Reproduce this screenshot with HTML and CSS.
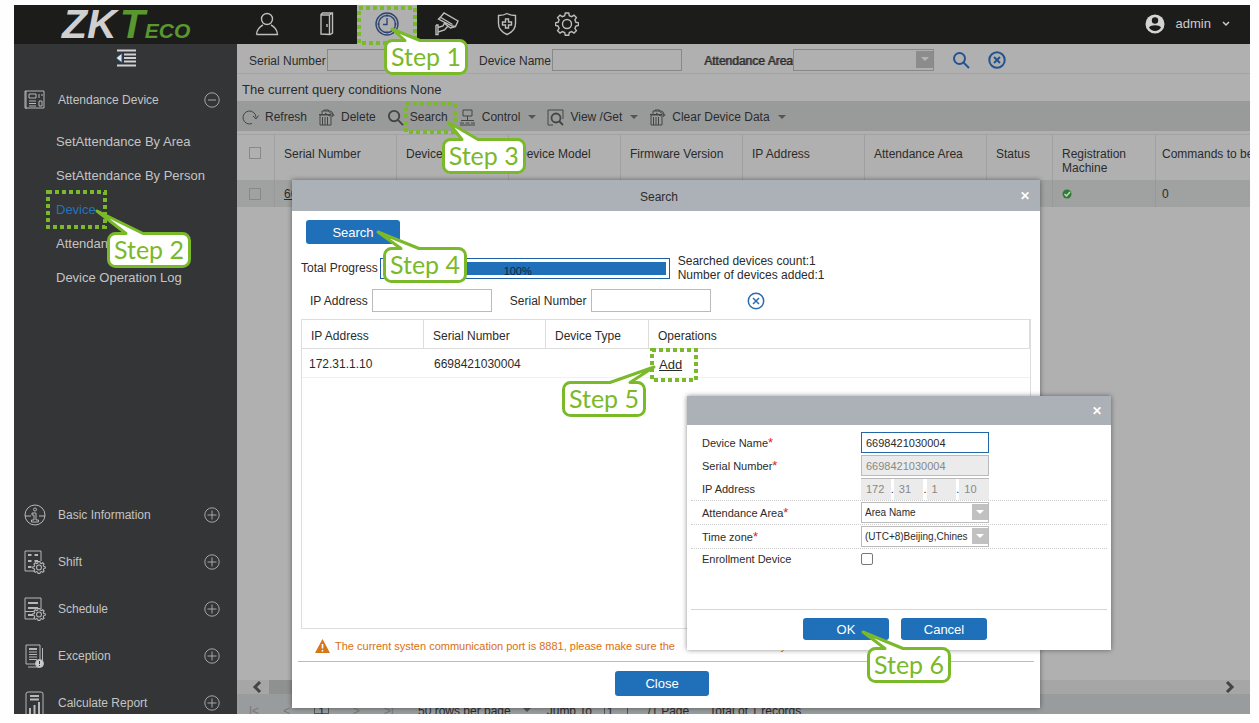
FILE: index.html
```
<!DOCTYPE html>
<html lang="en">
<head>
  <meta charset="UTF-8">
  <meta name="viewport" content="width=device-width, initial-scale=1.0">
  <title>ZKTeco - Attendance Device</title>
  <link rel="stylesheet" href="styles.css">
</head>
<body>
  <svg class="defs" width="0" height="0">
    <symbol id="plus" viewBox="0 0 16 16"><circle cx="8" cy="8" r="7.2"/><path d="M8 3.5v9M3.5 8h9"/></symbol>
    <symbol id="minus" viewBox="0 0 16 16"><circle cx="8" cy="8" r="7.2"/><path d="M4 8h8"/></symbol>
    <symbol id="trash" viewBox="0 0 17 17"><path d="M2 6h11v10H2zM1 5.5h12M4.500 8v8M7 8v8M9.500 8v8M4 5V2h6l5 4-1 2M6 2V1h4l4 2 2 4M7 4l5 3"/></symbol>
    <symbol id="lens" viewBox="0 0 18 18"><circle cx="7.500" cy="7.500" r="5.500"/><path d="M11.500 11.500 17 17"/></symbol>
    <symbol id="clear" viewBox="0 0 18 18"><circle cx="9" cy="9" r="7.700"/><path class="cross" d="M6 6l6 6M12 6l-6 6"/></symbol>
    <symbol id="cog" viewBox="0 0 24 24"><path d="M10.300 1h3.400l.6 2.700 2.400 1 2.300-1.500 2.400 2.400-1.500 2.300 1 2.400 2.700.6v2.400l-2.700.7-1 2.400 1.500 2.300-2.400 2.400-2.300-1.500-2.400 1-.6 2.700h-3.400l-.6-2.700-2.400-1-2.300 1.500-2.400-2.400 1.500-2.300-1-2.400-2.700-.7v-2.400l2.700-.6 1-2.400-1.500-2.300 2.400-2.400 2.300 1.500 2.400-1z"/><circle cx="12" cy="12" r="4.500"/></symbol>
  </svg>

  <div class="app">
    <header class="topbar">
      <div class="logo">ZK<span class="logo-t">T</span><span class="logo-eco">ECO</span></div>
      <nav class="tabs">
        <a class="tab" href="#" aria-label="Personnel"><svg width="24" height="24" viewBox="0 0 24 24"><circle cx="12" cy="7" r="5.500"/><path d="M1.500 22.500h21c0-4-3-8-6.500-9.500M1.500 22.500c0-4 3-8 6.500-9.500"/></svg></a>
        <a class="tab" href="#" aria-label="Access"><svg width="24" height="24" viewBox="0 0 24 24"><path d="M6 22V2.500L7.500 1H17.500V21L15 22.500zM6 22V3h8.500v19.500M14.500 3l3-2M12 12v3"/></svg></a>
        <span class="tab tab-active">
          <a href="#" aria-label="Attendance"><svg width="24" height="24" viewBox="0 0 24 24"><circle cx="12" cy="12" r="11"/><circle cx="12" cy="12" r="8.500"/><path d="M12 6v6.500H8M12 2.500v2M12 19.500v2M2.500 12h2M19.500 12h2"/></svg></a>
          <svg class="mark mark-1"><rect/></svg>
          <span class="callout callout-1"><svg><path d="M8.500 1.500H21L8-10 36 1.500H75.500a7 7 0 0 1 7 7V27.500a7 7 0 0 1-7 7H8.500a7 7 0 0 1-7-7V8.500a7 7 0 0 1 7-7z"/></svg><b>Step 1</b></span>
        </span>
        <a class="tab" href="#" aria-label="Video"><svg width="24" height="24" viewBox="0 0 24 24"><path d="M6 4.500 9 1l14 8-2.500 5.500-3.500-.5L3.500 7zM5 5l12.500 7.500M20.500 14.500l-5 1.500-6-4.500M1 13v9.500h2V20l6.500-2 3.500-4M3 20v-4.500l5-1.500 1.500-3M1 13h2v2.500"/></svg></a>
        <a class="tab" href="#" aria-label="Security"><svg width="24" height="24" viewBox="0 0 24 24"><path d="M12 1.500c2.500 1.500 5 2 8.500 2v8c0 5.500-4 9-8.500 11-4.500-2-8.500-5.500-8.500-11v-8c3.500 0 6-.5 8.500-2z"/><path d="M10.500 7h3v3h3v3h-3v3h-3v-3h-3v-3h3z"/></svg></a>
        <a class="tab" href="#" aria-label="System"><svg width="24" height="24"><use href="#cog"/></svg></a>
      </nav>
      <button class="user" type="button">
        <svg width="20" height="20" viewBox="0 0 20 20"><circle cx="10" cy="10" r="9.500" fill="#d4d4d4"/><circle cx="10" cy="6.500" r="3.200" fill="#1c1c1b"/><path d="M4 13.500c1.500-3 10.500-3 12 0-2.500 4.500-9.500 4.500-12 0z" fill="#1c1c1b"/></svg>
        <span>admin</span>
        <svg width="8" height="6" viewBox="0 0 8 6"><path d="M1 1l3 3 3-3" fill="none" stroke="#ccc" stroke-width="1.500"/></svg>
      </button>
    </header>

    <div class="body">
      <aside class="sidebar">
        <button class="collapse" type="button" aria-label="Collapse menu"><svg width="20" height="18" viewBox="0 0 20 18"><path d="M1 1.500h19M8 5.500h12M8 9h12M8 12.500h12M1 16.500h19" stroke="#d2d2d2" stroke-width="2"/><path d="M6 4v10L0 9z" fill="#dfe6ee" stroke="#2c4b70"/></svg></button>
        <a class="group" href="#"><svg class="gicon" viewBox="0 0 22 22"><path d="M2 2v18M1 2h19v17H1zM5 5h7v4H5zM5 12h7M5 14.500h7M5 17h7M15 5v4M18 5v2M15 12h3v5h-3z"/></svg><span>Attendance Device</span><svg class="toggle"><use href="#minus"/></svg></a>
        <ul class="submenu">
          <li><a href="#">SetAttendance By Area</a></li>
          <li><a href="#">SetAttendance By Person</a></li>
          <li class="current"><a href="#">Device</a>
            <svg class="mark mark-2"><rect/></svg>
            <span class="callout callout-2"><svg><path d="M8.500 1.500H19L-10-21 36 1.500H75.500a7 7 0 0 1 7 7V27.500a7 7 0 0 1-7 7H8.500a7 7 0 0 1-7-7V8.500a7 7 0 0 1 7-7z"/></svg><b>Step 2</b></span>
          </li>
          <li><a href="#">Attendance Point</a></li>
          <li><a href="#">Device Operation Log</a></li>
        </ul>
        <a class="group" href="#"><svg class="gicon" viewBox="0 0 22 22"><circle cx="11" cy="11" r="10"/><circle cx="11" cy="5.500" r="1.500"/><path d="M1 12h6M15 12h6M8 9h4v7h2.500v2h-7v-2H10v-5H8z"/></svg><span>Basic Information</span><svg class="toggle"><use href="#plus"/></svg></a>
        <a class="group" href="#"><svg class="gicon" viewBox="0 0 22 24"><path d="M10 21H1V1h16v10"/><path class="thick" d="M4 5h3.500M10.500 5H14M4 11h3.500M10.500 11H14M4 17h3.500"/><use href="#cog" x="8" y="11" width="14" height="13"/></svg><span>Shift</span><svg class="toggle"><use href="#plus"/></svg></a>
        <a class="group" href="#"><svg class="gicon" viewBox="0 0 22 24"><path d="M10 22H1V1h16v11M1 14.500h9"/><path class="thick" d="M4 6h10M4 11h10M4 18h5"/><use href="#cog" x="8" y="11" width="14" height="13"/></svg><span>Schedule</span><svg class="toggle"><use href="#plus"/></svg></a>
        <a class="group" href="#"><svg class="gicon" viewBox="0 0 22 24"><path d="M12 20H2V1h14v15M18.500 4v14M4 23h12M5 8h8M5 10.500h8M5 13h8M5 15.500h8"/><path class="thick" d="M5 5h8"/><circle cx="15.500" cy="19.500" r="4" fill="#ccc"/><path d="M15.500 17v3M15.500 21v1" stroke="#333536"/></svg><span>Exception</span><svg class="toggle"><use href="#plus"/></svg></a>
        <a class="group" href="#"><svg class="gicon" viewBox="0 0 22 24"><rect x="2" y="1" width="17" height="24" rx="2"/><path class="thick" d="M6 5h9M6 8.500h9M6 17v8M10.500 14v11M15 11v14"/></svg><span>Calculate Report</span><svg class="toggle"><use href="#plus"/></svg></a>
      </aside>

      <main class="content">
        <form class="filters">
          <label for="f-sn">Serial Number</label><input id="f-sn" type="text">
          <label class="f-name" for="f-dn">Device Name</label><input id="f-dn" type="text">
          <label class="f-area" for="f-area">Attendance Area</label>
          <span class="select"><select id="f-area"><option></option></select></span>
          <button class="icon-btn" type="button" aria-label="Query"><svg width="18" height="18"><use href="#lens"/></svg></button>
          <button class="icon-btn" type="button" aria-label="Clear"><svg width="18" height="18"><use href="#clear"/></svg></button>
        </form>
        <p class="query">The current query conditions None</p>

        <div class="toolbar">
          <button class="tool" type="button"><svg width="17" height="17" viewBox="0 0 17 17"><path d="M10 14.500A6.500 6.500 0 1 1 14 8.500M11 7l3 3 2.500-3.500"/></svg>Refresh</button>
          <button class="tool" type="button"><svg width="17" height="17"><use href="#trash"/></svg>Delete</button>
          <span class="tool-wrap">
            <button class="tool" type="button"><svg class="bold" width="17" height="17"><use href="#lens"/></svg>Search</button>
            <svg class="mark mark-3"><rect/></svg>
            <span class="callout callout-3"><svg><path d="M8.500 1.500H20L6-16 36 1.500H75.500a7 7 0 0 1 7 7V27.500a7 7 0 0 1-7 7H8.500a7 7 0 0 1-7-7V8.500a7 7 0 0 1 7-7z"/></svg><b>Step 3</b></span>
          </span>
          <button class="tool" type="button"><svg width="17" height="17" viewBox="0 0 17 17"><path d="M4 1h9v6H4zM8.500 7v4M2 11.500h13M1 14h4M6.500 14h4M12 14h4M1 16h15"/></svg>Control<i class="caret"></i></button>
          <button class="tool" type="button"><svg width="17" height="17" viewBox="0 0 17 17"><path d="M6 16H1V1h15v9"/><circle cx="9" cy="9" r="4.500" stroke-width="1.800"/><path d="M12 12l4 4" stroke-width="1.800"/></svg>View /Get<i class="caret"></i></button>
          <button class="tool" type="button"><svg width="17" height="17"><use href="#trash"/></svg>Clear Device Data<i class="caret"></i></button>
        </div>

        <div class="grid-wrap">
          <table class="grid">
            <colgroup><col class="w38"><col class="w122"><col class="w112"><col class="w112"><col class="w122"><col class="w122"><col class="w122"><col class="w66"><col class="w103"><col></colgroup>
            <thead>
              <tr>
                <th><input type="checkbox" aria-label="Select all"></th>
                <th>Serial Number</th><th>Device Name</th><th>Device Model</th><th>Firmware Version</th><th>IP Address</th><th>Attendance Area</th><th>Status</th><th>Registration Machine</th><th class="nowrap">Commands to be</th>
              </tr>
            </thead>
            <tbody>
              <tr>
                <td><input type="checkbox" aria-label="Select row"></td>
                <td><a href="#">6698421030004</a></td><td></td><td></td><td></td><td></td><td></td><td></td>
                <td><svg class="ok" width="10" height="10" viewBox="0 0 10 10"><circle cx="5" cy="5" r="4.500" fill="#2f7d32"/><path d="M2.500 5l2 2 3.500-4" fill="none" stroke="#c5d8c5" stroke-width="1.500"/></svg></td>
                <td class="nowrap">0</td>
              </tr>
            </tbody>
          </table>
        </div>

        <div class="hscroll">
          <svg width="10" height="12" viewBox="0 0 10 12"><path d="M8 1 3 6l5 5"/></svg>
          <span class="thumb"></span>
          <svg width="10" height="12" viewBox="0 0 10 12"><path d="M2 1l5 5-5 5"/></svg>
        </div>
        <div class="pager">
          <div class="pages"><span class="dim">|&lt;</span><span class="dim">&lt;</span><span class="page">1</span><span class="dim">&gt;</span><span class="dim">&gt;|</span></div>
          <span>50 rows per page</span><i class="caret"></i><label for="jump">Jump To</label><input id="jump" type="text" value="1"><span class="total">/1 Page</span><span class="total">Total of 1 records</span>
        </div>
      </main>
    </div>

    <section class="dialog search-dialog">
      <header class="dialog-head"><h2>Search</h2><button type="button" class="close" aria-label="Close">&#x2715;</button></header>
      <div class="dialog-body">
        <div class="btn-wrap">
          <button class="btn btn-search" type="button">Search</button>
          <span class="callout callout-4"><svg><path d="M8.500 1.500H18L-5-15 36 1.500H75.500a7 7 0 0 1 7 7V27.500a7 7 0 0 1-7 7H8.500a7 7 0 0 1-7-7V8.500a7 7 0 0 1 7-7z"/></svg><b>Step 4</b></span>
        </div>
        <div class="progress-row">
          <span>Total Progress</span>
          <div class="progress"><div class="progress-fill">100%</div></div>
          <div class="counts">Searched devices count:1<br>Number of devices added:1</div>
        </div>
        <div class="search-row">
          <label for="s-ip">IP Address</label><input id="s-ip" type="text">
          <label for="s-sn">Serial Number</label><input id="s-sn" type="text">
          <button class="icon-btn" type="button" aria-label="Clear"><svg width="18" height="18"><use href="#clear"/></svg></button>
        </div>
        <div class="results">
          <table>
            <colgroup><col class="w122"><col class="w122"><col class="w103"><col></colgroup>
            <thead><tr><th>IP Address</th><th>Serial Number</th><th>Device Type</th><th>Operations</th></tr></thead>
            <tbody>
              <tr>
                <td>172.31.1.10</td><td>6698421030004</td><td></td>
                <td><span class="add-wrap"><a href="#">Add</a>
                  <svg class="mark mark-5"><rect/></svg>
                  <span class="callout callout-5"><svg><path d="M8.500 1.500H48L92-14 68 1.500H75.500a7 7 0 0 1 7 7V27.500a7 7 0 0 1-7 7H8.500a7 7 0 0 1-7-7V8.500a7 7 0 0 1 7-7z"/></svg><b>Step 5</b></span>
                </span></td>
              </tr>
            </tbody>
          </table>
        </div>
        <p class="warning"><svg width="15" height="14" viewBox="0 0 15 14"><path d="M7.500 0 15 14H0z" fill="#d5761b"/><path d="M7.500 5v4.500M7.500 11v1.500" stroke="#fff" stroke-width="1.600"/></svg><span>The current systen communication port is 8881, please make sure the</span> <span class="rest">network is normally</span></p>
      </div>
      <footer class="dialog-foot"><button class="btn btn-close" type="button">Close</button></footer>
    </section>

    <section class="dialog add-dialog">
      <header class="dialog-head"><button type="button" class="close" aria-label="Close">&#x2715;</button></header>
      <form class="add-form">
        <div class="row"><label for="a-name">Device Name<em>*</em></label><input id="a-name" class="focused" type="text" value="6698421030004" autofocus></div>
        <div class="row"><label for="a-sn">Serial Number<em>*</em></label><input id="a-sn" type="text" value="6698421030004" disabled></div>
        <div class="row line"><label for="a-ip">IP Address</label><span class="ip"><input id="a-ip" value="172" disabled>.<input value="31" aria-label="IP part 2" disabled>.<input value="1" aria-label="IP part 3" disabled>.<input value="10" aria-label="IP part 4" disabled></span></div>
        <div class="row line"><label for="a-area">Attendance Area<em>*</em></label><span class="select"><select id="a-area"><option>Area Name</option></select></span></div>
        <div class="row line"><label for="a-tz">Time zone<em>*</em></label><span class="select"><select id="a-tz"><option>(UTC+8)Beijing,Chines</option></select></span></div>
        <div class="row short"><label for="a-enroll">Enrollment Device</label><input id="a-enroll" type="checkbox"></div>
      </form>
      <footer class="add-foot">
        <span class="ok-wrap">
          <button class="btn" type="button">OK</button>
          <span class="callout callout-6"><svg><path d="M8.500 1.500H18L-4-15 36 1.500H75.500a7 7 0 0 1 7 7V27.500a7 7 0 0 1-7 7H8.500a7 7 0 0 1-7-7V8.500a7 7 0 0 1 7-7z"/></svg><b>Step 6</b></span>
        </span>
        <button class="btn" type="button">Cancel</button>
      </footer>
    </section>
  </div>
</body>
</html>
```
FILE: styles.css
```
* {
  box-sizing: border-box;
}
body {
  margin: 0;
  padding-top: 5px;
  background: #fefefe;
  font-family: "Liberation Sans", Arial, sans-serif;
  font-size: 12px;
  color: #2b2b2b;
}
button, input, select {
  font: inherit;
  color: inherit;
  margin: 0;
}
button {
  border: 0;
  padding: 0;
  background: none;
}
svg {
  flex: none;
}
.defs {
  position: absolute;
}
a {
  color: inherit;
  text-decoration: none;
}
p, ul, h2 {
  margin: 0;
  padding: 0;
}

.app {
  position: relative;
  display: flex;
  flex-direction: column;
  height: calc(100vh - 14px);
  margin: 0 9px 0 14px;
  overflow: hidden;
}

/* top bar */
.topbar {
  display: flex;
  height: 39px;
  background: #1c1c1b;
  color: #ccc;
}
.logo {
  width: 223px;
  padding-left: 48px;
  font-size: 41px;
  line-height: 39px;
  font-weight: bold;
  font-style: italic;
  color: #d0d0d0;
}
.logo-t, .logo-eco {
  color: #58982f;
}
.logo-t {
  margin-left: 3px;
}
.logo-eco {
  font-size: 21px;
}
.tabs {
  display: flex;
  flex: 1;
}
.tab {
  position: relative;
  display: flex;
  align-items: center;
  justify-content: center;
  width: 60px;
  height: 37px;
}
.tab svg {
  fill: none;
  stroke: #bdbdbd;
  stroke-width: 1.4;
}
.tab-active {
  height: 39px;
  padding-bottom: 2px;
  background: #b0b0b0;
}
.tab-active a {
  display: flex;
}
.tab-active a svg {
  stroke: #2f4673;
}
.user {
  display: flex;
  align-items: center;
  gap: 11px;
  height: 37px;
  padding-right: 20px;
  font-size: 13px;
  color: #ccc;
}

.body {
  display: flex;
  flex: 1;
  min-height: 0;
}

/* side menu */
.sidebar {
  width: 223px;
  background: #333536;
  color: #c4c4c4;
}
.collapse {
  display: flex;
  justify-content: center;
  width: 100%;
  height: 32px;
  padding-top: 5px;
}
.group {
  display: flex;
  align-items: center;
  gap: 12px;
  height: 47px;
  padding: 0 17px 0 10px;
}
.group span {
  flex: 1;
}
.gicon {
  width: 22px;
  height: 24px;
  fill: none;
  stroke: #b5b9b9;
}
.gicon .thick, .gicon use {
  stroke-width: 2;
}
.toggle {
  width: 16px;
  height: 16px;
  fill: none;
  stroke: #a3a8a8;
}
.submenu {
  height: 368px;
  padding-top: 2px;
  list-style: none;
  font-size: 13px;
  line-height: 34px;
}
.submenu li {
  position: relative;
  padding-left: 42px;
}
.current a {
  color: #2374be;
}

/* main area */
.content {
  display: flex;
  flex: 1;
  flex-direction: column;
  min-width: 0;
  background: #b0b0b0;
}
.filters {
  display: flex;
  align-items: center;
  height: 30px;
  padding: 2px 0 0 12px;
  border-bottom: 1px solid #a4a4a4;
}
.filters label {
  width: 78px;
  padding-top: 2px;
  white-space: nowrap;
}
.filters .f-name {
  width: 73px;
  margin-left: 22px;
}
.filters .f-area {
  width: 89px;
  margin-left: 22px;
  text-shadow: 1px 0 #555;
}
.filters input {
  width: 130px;
  height: 22px;
  border: 1px solid #888;
  background: #b0b0b0;
}
.select {
  position: relative;
  display: block;
}
.select select {
  width: 100%;
  height: 21px;
  padding: 0 3px;
  border: 1px solid #bbb;
  border-radius: 0;
  appearance: none;
  background: #fff;
}
.select::after {
  content: "";
  position: absolute;
  right: 1px;
  top: 2px;
  width: 16px;
  height: 16px;
  background: #c1c1c1;
  pointer-events: none;
}
.select::before {
  content: "";
  position: absolute;
  z-index: 1;
  right: 5px;
  top: 8px;
  border: 4px solid transparent;
  border-top-color: #fff;
  pointer-events: none;
}
.filters .select {
  width: 141px;
}
.filters select {
  height: 22px;
  border-color: #888;
  background: #b0b0b0;
}
.filters .select::after {
  width: 17px;
  height: 17px;
  background: #8c8c8c;
}
.filters .select::before {
  border-top-color: #b5b5b5;
}
.icon-btn {
  display: flex;
  margin-left: 18px;
}
.icon-btn svg {
  fill: none;
  stroke: #24538f;
  stroke-width: 2;
}
.icon-btn .cross {
  stroke-width: 3;
}
.query {
  height: 27px;
  padding-left: 5px;
  font-size: 13px;
  line-height: 32px;
}
.toolbar {
  display: flex;
  gap: 11px;
  height: 30px;
  padding-left: 5px;
  background: #999b9b;
}
.tool-wrap {
  position: relative;
}
.tool {
  display: flex;
  align-items: center;
  gap: 6px;
  height: 32px;
  white-space: nowrap;
}
.tool svg {
  fill: none;
  stroke: #444;
}
.tool .bold {
  stroke-width: 2;
}
.caret {
  margin-left: 2px;
  border: 4px solid transparent;
  border-top-color: #555;
  border-bottom: 0;
}

.grid-wrap {
  flex: 1;
  min-height: 0;
  margin-top: 3px;
  overflow: hidden;
  border-top: 1px solid #a2a2a2;
}
table {
  width: 100%;
  table-layout: fixed;
  border-collapse: separate;
  border-spacing: 0;
}
th, td {
  padding: 0;
  font-weight: normal;
  text-align: left;
}
.w38 { width: 38px; }
.w66 { width: 66px; }
.w103 { width: 103px; }
.w112 { width: 112px; }
.w122 { width: 122px; }
.grid th {
  height: 45px;
  padding: 12px 0 0 9px;
  border-right: 1px solid #a0a0a0;
  line-height: 14px;
  vertical-align: top;
}
.grid td {
  height: 27px;
  padding-left: 9px;
  border-right: 1px solid #999;
  background: #9fa2a1;
}
.grid .nowrap {
  padding-left: 6px;
  border-right: 0;
  white-space: nowrap;
}
.grid td a, .add-wrap a {
  text-decoration: underline;
}
input[type="checkbox"] {
  display: block;
  width: 12px;
  height: 12px;
  border: 1px solid #777;
  border-radius: 2px;
  appearance: none;
}
.grid input[type="checkbox"] {
  margin-left: 3px;
  border-color: #888;
  border-radius: 0;
}
.grid .ok {
  display: block;
}
.hscroll {
  display: flex;
  align-items: center;
  justify-content: space-between;
  height: 14px;
  padding: 0 15px;
  background: #a6a6a6;
}
.hscroll svg {
  fill: none;
  stroke: #444;
  stroke-width: 3;
}
.thumb {
  flex: 1;
  height: 14px;
  margin: 0 210px 0 7px;
  background: #8f9090;
}
.pager {
  display: flex;
  gap: 12px;
  height: 20px;
  padding: 10px 0 0 12px;
  overflow: hidden;
  background: #999c9c;
  line-height: 14px;
  white-space: nowrap;
}
.pages {
  display: flex;
  gap: 24px;
  margin-right: 12px;
}
.pager .dim {
  color: #777;
}
.pager .page {
  padding: 0 3px;
  border: 1px solid #555;
}
.pager .caret {
  margin: 4px 4px 0 0;
}
.pager input {
  width: 24px;
  height: 16px;
  border: 1px solid #555;
  background: none;
}
.total {
  margin-left: 8px;
}

/* dialogs */
.dialog {
  position: absolute;
  display: flex;
  flex-direction: column;
  background: #fff;
  box-shadow: 0 0 5px rgba(0, 0, 0, .45);
}
.search-dialog {
  z-index: 10;
  left: 278px;
  right: 210px;
  top: 175px;
  bottom: 6px;
}
.dialog-head {
  display: flex;
  align-items: center;
  justify-content: flex-end;
  height: 31px;
  padding-right: 10px;
  background: #abb1b7;
}
.dialog-head h2 {
  flex: 1;
  padding: 3px 0 0 6px;
  font-size: 12px;
  font-weight: normal;
  text-align: center;
}
.close {
  font-size: 12px;
  font-weight: bold;
  color: #fff;
}
.dialog-body {
  display: flex;
  flex: 1;
  flex-direction: column;
  padding: 9px 9px 0;
}
.btn {
  border-radius: 3px;
  background: #1f70b8;
  font-size: 13px;
  color: #fff;
}
.btn-wrap {
  position: relative;
  margin-left: 5px;
}
.btn-search {
  display: block;
  width: 94px;
  height: 24px;
}
.progress-row {
  display: flex;
  align-items: center;
  gap: 2px;
  margin-top: 10px;
  line-height: 14px;
}
.progress {
  width: 290px;
  height: 21px;
  padding: 3px;
  border: 1px solid #1f5ea6;
}
.progress-fill {
  height: 13px;
  padding-right: 14px;
  background: #1f70b8;
  line-height: 18px;
  text-align: center;
  font-size: 11px;
  color: #10243c;
}
.counts {
  margin-left: 6px;
}
.search-row {
  display: flex;
  align-items: center;
  gap: 4px;
  margin: 7px 0 7px 9px;
}
.search-row input {
  width: 120px;
  height: 23px;
  margin-right: 14px;
  border: 1px solid #bbb;
}
.search-row .icon-btn svg {
  stroke: #2a6cad;
  stroke-width: 1.5;
}
.search-row .cross {
  stroke-width: 2;
}
.results {
  flex: 1;
  border: 1px solid #ddd;
}
.results th {
  height: 29px;
  padding: 3px 0 0 9px;
  border-right: 1px solid #ddd;
  border-bottom: 1px solid #ddd;
}
.results td {
  height: 29px;
  padding: 2px 0 0 10px;
  border-bottom: 1px solid #f0f0f0;
}
.results td:first-child {
  padding-left: 7px;
}
.add-wrap {
  position: relative;
  display: inline-block;
  font-size: 13px;
}
.warning {
  display: flex;
  align-items: center;
  gap: 5px;
  height: 32px;
  padding: 2px 0 0 14px;
  font-size: 11px;
  color: #d9700f;
  white-space: nowrap;
}
.rest {
  margin-left: 12px;
}
.dialog-foot {
  margin: 0 6px;
  padding: 9px 8px 12px 0;
  border-top: 1px solid #bbb;
  text-align: center;
}
.btn-close {
  width: 94px;
  height: 25px;
}

.add-dialog {
  z-index: 20;
  left: 673px;
  right: 139px;
  top: 391px;
  bottom: 64px;
  font-size: 11px;
}
.add-dialog .dialog-head {
  height: 29px;
  padding-right: 9px;
}
.add-form {
  flex: 1;
  margin: 0 4px;
  padding-top: 6px;
}
.row {
  display: flex;
  align-items: center;
  height: 23px;
}
.row.line {
  height: 24px;
  border-bottom: 1px dotted #ccc;
}
.row.short {
  height: 20px;
}
.row label {
  width: 170px;
  padding-left: 11px;
}
.row em {
  font-style: normal;
  font-size: 13px;
  line-height: 11px;
  color: #d22;
}
.row input[type="text"], .row .select, .ip {
  width: 128px;
  height: 21px;
}
.row input[type="text"] {
  padding: 0 4px;
  border: 1px solid #bbb;
}
.row input.focused[type="text"] {
  border-color: #2467a8;
  outline: none;
}
.row select {
  font-size: 10px;
}
.row input:disabled {
  background: #ebebeb;
  color: #888;
}
.ip {
  display: flex;
  align-items: center;
  border-top: 1px solid #bbb;
}
.ip input {
  flex: 1;
  width: 0;
  height: 21px;
  padding: 0 5px;
  border: 0;
}
.add-foot {
  display: flex;
  justify-content: center;
  gap: 12px;
  margin: 0 4px;
  padding: 8px 8px 10px 0;
  border-top: 1px solid #d5d5d5;
}
.add-foot .btn {
  display: block;
  width: 86px;
  height: 22px;
}
.ok-wrap {
  position: relative;
}

/* step markers */
.mark, .tab .mark {
  position: absolute;
  fill: none;
  stroke: #7ab929;
  stroke-width: 4;
  stroke-dasharray: 4 3;
  pointer-events: none;
}
.mark rect {
  x: 2px;
  y: 2px;
  width: calc(100% - 4px);
  height: calc(100% - 4px);
}
.mark-1 { left: 0; top: 1px; width: 60px; height: 39px; }
.mark-2 { left: 32px; top: -3px; width: 61px; height: 39px; }
.mark-3 { left: 17px; top: 1px; width: 53px; height: 32px; }
.mark-5 { left: -9px; top: -9px; width: 48px; height: 34px; }
.callout {
  position: absolute;
  z-index: 5;
  width: 84px;
  height: 36px;
  text-align: center;
}
.callout svg, .tab .callout svg {
  position: absolute;
  left: 0;
  top: 0;
  width: 84px;
  height: 36px;
  overflow: visible;
  fill: #fff;
  stroke: #7ab929;
  stroke-width: 3;
  stroke-linejoin: round;
}
.callout b {
  position: relative;
  font-family: Lato, "Open Sans", sans-serif;
  font-size: 25px;
  font-weight: normal;
  line-height: 35px;
  white-space: nowrap;
  color: #7ab929;
}
.callout-1 { left: 27px; top: 34px; }
.callout-2 { left: 93px; top: 39px; }
.callout-3 { left: 55px; top: 37px; }
.callout-4 { left: 77px; top: 27px; }
.callout-5 { left: -97px; top: 24px; }
.callout-6 { left: 64px; top: 29px; }
```
